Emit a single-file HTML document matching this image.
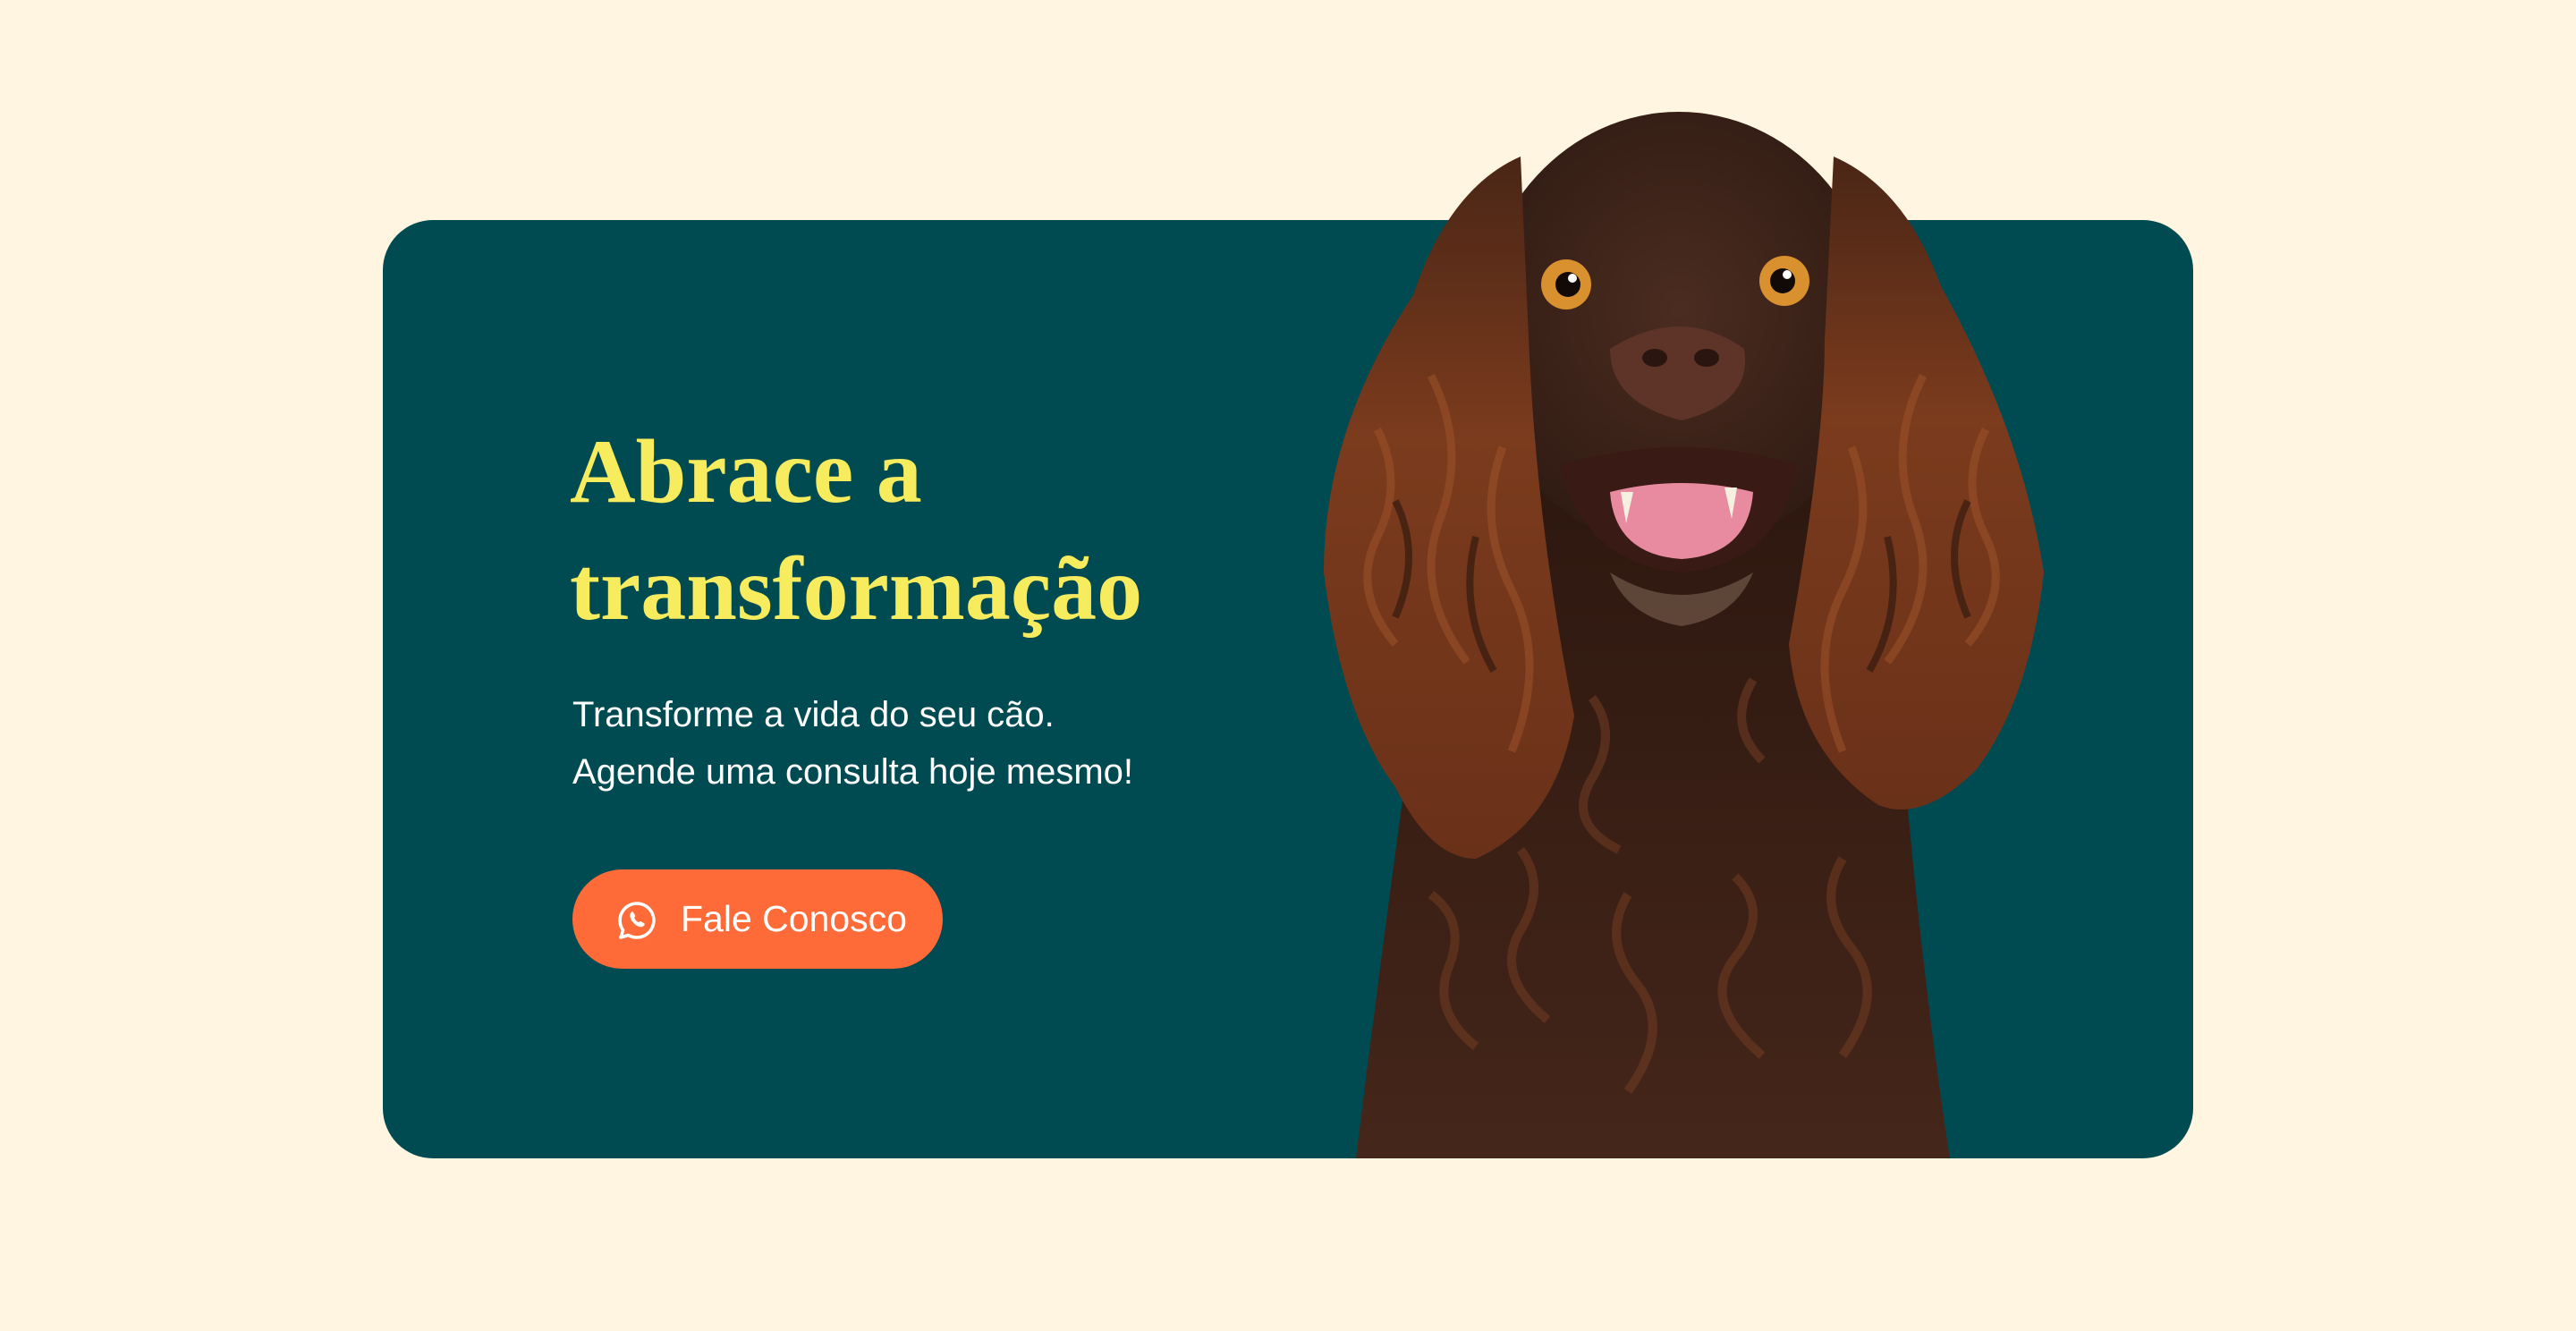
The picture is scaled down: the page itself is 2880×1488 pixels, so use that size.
<!DOCTYPE html>
<html><head><meta charset="utf-8"><style>
html,body{margin:0;padding:0;}
body{width:2880px;height:1488px;background:#FFF5E1;position:relative;overflow:hidden;font-family:"Liberation Sans",sans-serif;}
.card{position:absolute;left:428px;top:246px;width:2024px;height:1049px;background:#004A52;border-radius:56px;}
h1{position:absolute;left:637px;top:462px;margin:0;font-family:"Liberation Serif",serif;font-weight:bold;font-size:102px;line-height:131px;color:#F7EC5E;letter-spacing:0px;}
p{position:absolute;left:640px;top:767px;margin:0;font-size:40px;line-height:64px;color:#fff;}
.btn{position:absolute;left:640px;top:972px;width:414px;height:111px;border-radius:56px;background:#FF6B38;}
.btn span{position:absolute;left:121px;top:30px;font-size:41px;line-height:50px;color:#fff;}
svg.dog{position:absolute;left:0;top:0;}
</style></head><body>
<div class="card"></div>
<h1>Abrace a<br>transformação</h1>
<p>Transforme a vida do seu cão.<br>Agende uma consulta hoje mesmo!</p>
<div class="btn">
<svg style="position:absolute;left:49px;top:34px" width="46" height="46" viewBox="0 0 46 46"><path d="M23 4a19 19 0 1 1-9.5 35.5L5 42l2.6-8A19 19 0 0 1 23 4z" fill="none" stroke="#fff" stroke-width="3.6" stroke-linejoin="round"/><path d="M16.5 14c1-1 2-1 2.6 0l2 3.5c.5 1-.3 1.8-1 2.5.8 2.2 2.8 4.3 5 5.1.7-.7 1.5-1.5 2.5-1l3.4 2c1 .6 1 1.6 0 2.6-1.6 1.7-3.6 2-6 1-4-1.6-7.4-5-9-9-1-2.4-.8-4.8.5-6.7z" fill="#fff"/></svg>
<span>Fale Conosco</span></div>
<svg class="dog" width="2880" height="1488" viewBox="0 0 2880 1488">
<defs>
<linearGradient id="ear" x1="0" y1="0" x2="0" y2="1"><stop offset="0" stop-color="#4a2616"/><stop offset=".4" stop-color="#7b3b1d"/><stop offset="1" stop-color="#6a3119"/></linearGradient>
<radialGradient id="face" cx=".5" cy=".45" r=".6"><stop offset="0" stop-color="#4b2c20"/><stop offset="1" stop-color="#2e1a12"/></radialGradient>
<linearGradient id="body" x1="0" y1="0" x2="0" y2="1"><stop offset="0" stop-color="#2a160e"/><stop offset="1" stop-color="#45261a"/></linearGradient>
</defs>
<path d="M1650 450 Q1640 700 1570 880 Q1540 1100 1516 1295 L2180 1295 Q2150 1100 2130 870 Q2100 700 2100 450 Z" fill="url(#body)"/>
<g fill="none" stroke="#6e3a22" stroke-width="10" opacity=".6">
<path d="M1600 1000q40 30 20 80t30 90"/><path d="M1700 950q30 40 0 90t30 100"/><path d="M1820 1000q-30 50 10 100t-10 120"/><path d="M1940 980q40 40 0 90t30 110"/><path d="M2060 960q-30 50 10 100t-10 120"/><path d="M1780 780q30 40 0 90t30 80"/><path d="M1960 760q-30 50 10 90"/>
</g>
<ellipse cx="1877" cy="370" rx="225" ry="245" fill="url(#face)"/>
<path d="M1700 175 Q1620 210 1580 330 Q1480 480 1480 640 Q1500 800 1560 880 Q1600 960 1650 960 Q1740 920 1760 800 Q1720 600 1710 400 Z" fill="url(#ear)"/>
<path d="M2050 175 Q2130 210 2170 320 Q2260 480 2285 640 Q2270 780 2210 860 Q2150 920 2100 900 Q2010 840 2000 720 Q2040 500 2040 380 Z" fill="url(#ear)"/>
<g fill="none" stroke="#9a5028" stroke-width="9" opacity=".6">
<path d="M1540 480q30 60 0 120t20 120"/><path d="M1600 420q40 80 10 160t30 160"/><path d="M1680 500q-30 80 10 160t0 180"/>
<path d="M2220 480q-30 60 0 120t-20 120"/><path d="M2150 420q-40 80 -10 160t-30 160"/><path d="M2070 500q30 80 -10 160t0 180"/>
</g>
<g fill="none" stroke="#2c160d" stroke-width="8" opacity=".6">
<path d="M1560 560q30 60 0 130"/><path d="M1650 600q-20 80 20 150"/><path d="M2200 560q-30 60 0 130"/><path d="M2110 600q20 80 -20 150"/>
</g>
<circle cx="1751" cy="318" r="28" fill="#d9902e"/><circle cx="1753" cy="318" r="14" fill="#120a06"/><circle cx="1758" cy="311" r="5" fill="#fff"/>
<circle cx="1995" cy="314" r="28" fill="#d9902e"/><circle cx="1993" cy="314" r="14" fill="#120a06"/><circle cx="1998" cy="307" r="5" fill="#fff"/>
<path d="M1800 390 Q1880 340 1950 390 Q1960 450 1880 470 Q1800 450 1800 390Z" fill="#5e3428"/>
<ellipse cx="1850" cy="400" rx="14" ry="10" fill="#2a1510"/><ellipse cx="1908" cy="400" rx="14" ry="10" fill="#2a1510"/>
<path d="M1745 520 Q1880 480 2010 520 Q1990 630 1880 640 Q1770 630 1745 520Z" fill="#3a1a14"/>
<path d="M1800 550 Q1880 530 1960 550 Q1955 620 1880 625 Q1805 620 1800 550Z" fill="#e98ba0"/>
<path d="M1812 550l6 35 8-35z M1942 545l-6 35-8-35z" fill="#f5f0e0"/>
<path d="M1800 640 Q1880 690 1960 640 Q1940 690 1880 700 Q1820 690 1800 640Z" fill="#8a7060" opacity=".5"/>
</svg>
</body></html>
